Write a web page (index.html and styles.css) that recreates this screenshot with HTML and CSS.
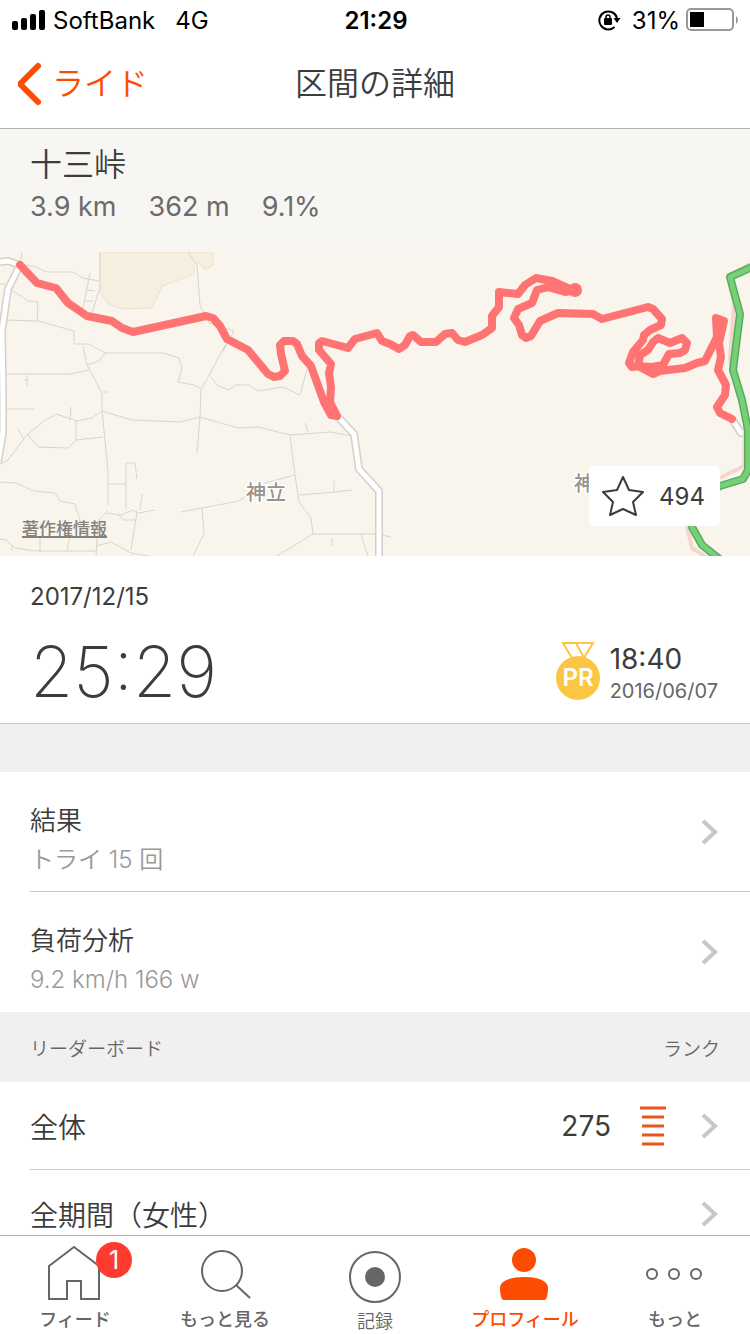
FILE: index.html
```
<!DOCTYPE html>
<html lang="ja">
<head>
    <meta charset="UTF-8">
    <meta name="viewport" content="width=device-width, initial-scale=1.0">
    <title>区間の詳細</title>
    <link rel="stylesheet" href="styles.css">
</head>
<body>

    <div class="status-bar">
        <div class="status-left">
            <svg class="signal" width="34" height="20" viewBox="0 0 34 20">
                <rect x="0" y="11" width="6" height="9" rx="2"/>
                <rect x="9" y="8" width="6" height="12" rx="2"/>
                <rect x="18" y="4" width="6" height="16" rx="2"/>
                <rect x="27" y="0" width="6" height="20" rx="2"/>
            </svg>
            <span class="carrier">SoftBank</span>
            <span>4G</span>
        </div>
        <span class="clock">21:29</span>
        <div class="status-right">
            <svg class="lock" width="24" height="22" viewBox="0 0 24 22">
                <path d="M16.500 18A9 9 0 1 1 19 9" fill="none" stroke="#000" stroke-width="2"/>
                <path d="M15.500 9h7l-3.500 5z"/>
                <rect x="6" y="9" width="8" height="7" rx="1"/>
                <path d="M8 10V8a2 2 0 0 1 4 0v2" fill="none" stroke="#000" stroke-width="1.500"/>
            </svg>
            <span>31%</span>
            <svg class="battery" width="54" height="24" viewBox="0 0 54 24">
                <rect x="1" y="1" width="46" height="21" rx="4" fill="none" stroke="#999" stroke-width="2"/>
                <rect x="4" y="4" width="14" height="15"/>
                <path d="M50 8a5 5 0 0 1 0 8z" fill="#999"/>
            </svg>
        </div>
    </div>

    <header class="nav">
        <a href="#" class="back">
            <svg width="26" height="44" viewBox="0 0 26 44">
                <path d="M22 4L4 22l18 18" fill="none" stroke="#fc4c02" stroke-width="6" stroke-linecap="round" stroke-linejoin="bevel"/>
            </svg>
            ライド
        </a>
        <h1>区間の詳細</h1>
    </header>

    <main class="content">
        <section class="segment">
            <h2>十三峠</h2>
            <div class="segment-stats">
                <span>3.9 km</span>
                <span>362 m</span>
                <span>9.1%</span>
            </div>
        </section>

        <section class="map">
            <svg class="map-canvas" viewBox="0 252 750 304">
                <!-- park -->
                <path class="park" d="M100 252V293l10 12 14 4 28-1 10-22 32-12 0-10 4-2 7 8 8-5V252z"/>

                <!-- small roads -->
                <g class="path">
                    <path d="M20 265l13 1 14 6 26 0 10 6 16 3M20 265l2-13M90 273l-7 35M99 290l-9 30M100 252v38M86 290l9 1M85 301l8 0M188 252l9 13 3 40 9 18 25 8-11 20"/>
                    <path d="M0 284h5M10 289l12 8 6 4 10 1-1 18M5 320l33 1 36 10 0 13 15 0 16 9 59 0 15 5 3 10-4 14 16 3 7 4"/>
                    <path d="M83 347l4 18 15 28 0 18 6 60 0 34M87 365l12-4 6-8M5 374l65 0 19-4M27 375v11M24 380h5M5 409h29M102 392h5"/>
                    <path d="M102 411l-10 7-15 3-21-7-12 7-17 14-19 25-8 4M28 435l10 12 30 1 8-8 27-3M71 407l-1 13M76 420v20M18 429l6 10"/>
                    <path d="M102 411l30 9 48 2 20-5 38 11 20-1 32 8 40-3 22 4M226 344l-25 46-1 28-3 35M305 423l3 9"/>
                    <path d="M211 377l6 8 11 5 8-5 13 0 9 6 25-4 17 8 7-26M290 435l5 40-30 8-26 18-58 11M295 475l4 27 12 16 2 16-36 22M299 495l36-3 17-2M334 481v10M313 534h62M332 538v8M361 534l7 22"/>
                    <path d="M126 510V463h9l2 16M108 484h18M142 494l-2 16M106 513l15 2 12-5 6 3 16-3M137 512l-6 38M119 515l4 5h14M202 508l2 26-11 22"/>
                    <path d="M0 482l16 1 18 8 21 2 5 8 15 3 6 20M108 510l-10 11-2 35M0 539l6 1 9 8 21 3 61 0M12 545v6M40 536v15M70 535l-3 16M96 546l15-4 20 11 18 3M382 535l9 2"/>
                </g>

                <!-- main roads -->
                <path class="road-edge" d="M0 262l8-1 12 4-12 24-6 42 1 65 0 36-5 30M337 416l17 18 5 35 20 22V560M732 419l9 14h9"/>
                <path class="road" d="M0 262l8-1 12 4-12 24-6 42 1 65 0 36-5 30M337 416l17 18 5 35 20 22V560M732 419l9 14h9"/>
                <path class="road-shade" d="M750 264L728 276 734 304 730 360 745 420 744 466 720 478M687 526L692 548 708 558"/>
                <path class="highway-edge" d="M752 267L730 277 740 314 733 370 742 400 748 430 748 470 743 479 720 486 689 506 692 527 702 545 722 561"/>
                <path class="highway" d="M752 267L730 277 740 314 733 370 742 400 748 430 748 470 743 479 720 486 689 506 692 527 702 545 722 561"/>

                <!-- segment -->
                <path class="route" d="M20 265L37 283 56 288 68 303 87 316 112 321 122 328 133 332 206 316 213 318 220 326 227 339 248 350 268 374 274 377 280 376 285 371 281 354 280 345 284 341 293 341 297 344 302 356 311 366 324 402 331 415 337 416 330 402 331 387 329 373 331 364 319 350 319 343 322 341 348 348 355 339 377 333 382 341 390 344 399 349 405 345 410 336 413 335 421 342 436 342 445 334 452 333 458 340 465 342 482 335 492 328 492 316 499 307 499 292 518 294 525 285 536 278 552 281 572 290 577 290 565 292 548 287 537 290 532 303 518 309 514 318 519 325 522 335 526 338 531 336 540 321 558 313 593 314 602 319 648 307 653 309 662 319 661 325 650 330 644 335 643 340 633 352 629 363 632 367 638 366 640 355 648 350 653 342 658 338 670 343 682 338 687 343 685 350 680 353 669 354 663 365 652 367 638 366 653 374 660 371 685 368 697 363 705 361 717 337 716 318 724 321 719 343 721 357 718 370 726 385 725 395 717 407 720 413 732 419"/>
                <circle class="route-end" cx="575" cy="290" r="7"/>

                <text class="place" x="246" y="500">神立</text>
                <text class="place" x="574" y="491">神立</text>
            </svg>
            <a href="#" class="copyright">著作権情報</a>
            <button class="favorite">
                <svg width="44" height="42" viewBox="0 0 44 42">
                    <path d="M22 2L28 15 42 17 32 27 35 40 22 34 9 40 12 27 2 17 16 15z" fill="none" stroke="#3c3c3c" stroke-width="2" stroke-linejoin="round"/>
                </svg>
                494
            </button>
        </section>

        <section class="effort">
            <div class="date">2017/12/15</div>
            <div class="effort-row">
                <div class="time">25:29</div>
                <div class="pr">
                    <svg width="44" height="58" viewBox="0 0 44 58">
                        <path d="M7 1h30l-9 15H16zM20 1l8 15" fill="none" stroke="#fcc644" stroke-width="2"/>
                        <circle cx="22" cy="36" r="22" fill="#fcc644"/>
                        <text class="pr-text" x="22" y="44">PR</text>
                    </svg>
                    <div class="pr-info">
                        <div class="pr-time">18:40</div>
                        <div class="pr-date">2016/06/07</div>
                    </div>
                </div>
            </div>
        </section>

        <ul class="list summary">
            <li>
                <a href="#" class="row tall">
                    <div class="row-text">
                        <div class="row-title">結果</div>
                        <div class="row-sub">トライ 15 回</div>
                    </div>
                    <svg class="chevron" width="17" height="26" viewBox="0 0 17 26"><path d="M2 2l12 11L2 24"/></svg>
                </a>
            </li>
            <li>
                <a href="#" class="row tall">
                    <div class="row-text">
                        <div class="row-title">負荷分析</div>
                        <div class="row-sub">9.2 km/h 166 w</div>
                    </div>
                    <svg class="chevron" width="17" height="26" viewBox="0 0 17 26"><path d="M2 2l12 11L2 24"/></svg>
                </a>
            </li>
        </ul>

        <div class="section-header">
            <span>リーダーボード</span>
            <span>ランク</span>
        </div>

        <ul class="list">
            <li>
                <a href="#" class="row">
                    <div class="row-text row-name">全体</div>
                    <span class="rank">275</span>
                    <svg class="rank-icon" width="26" height="40" viewBox="0 0 26 40">
                        <path d="M0 2h26M2 11h22M2 20h22M2 29h22M2 38h22" stroke="#e8561a" stroke-width="3"/>
                    </svg>
                    <svg class="chevron" width="17" height="26" viewBox="0 0 17 26"><path d="M2 2l12 11L2 24"/></svg>
                </a>
            </li>
            <li>
                <a href="#" class="row">
                    <div class="row-text row-name">全期間（女性）</div>
                    <svg class="chevron" width="17" height="26" viewBox="0 0 17 26"><path d="M2 2l12 11L2 24"/></svg>
                </a>
            </li>
        </ul>
    </main>

    <nav class="tab-bar">
        <a href="#" class="tab">
            <svg width="54" height="56" viewBox="0 0 54 56">
                <path d="M1 21L26 2l25 19v33H33V36H19v18H1z"/>
            </svg>
            <span class="badge">1</span>
            フィード
        </a>
        <a href="#" class="tab">
            <svg width="54" height="56" viewBox="0 0 54 56">
                <circle cx="24" cy="26" r="20"/>
                <path d="M38 40l14 13"/>
            </svg>
            もっと見る
        </a>
        <a href="#" class="tab record">
            <svg width="54" height="58" viewBox="0 0 54 58">
                <circle cx="27" cy="32" r="25"/>
                <circle cx="27" cy="32" r="10" fill="#666" stroke="none"/>
            </svg>
            記録
        </a>
        <a href="#" class="tab active">
            <svg width="54" height="56" viewBox="0 0 54 56">
                <circle cx="26" cy="15" r="12"/>
                <path d="M2 43C2 35 14 32 26 32s24 3 24 11c0 5-1 9-2 11-1 1-1 1-3 1H7c-2 0-2 0-3-1-1-2-2-6-2-11z"/>
            </svg>
            プロフィール
        </a>
        <a href="#" class="tab">
            <svg width="58" height="56" viewBox="0 0 58 56">
                <circle cx="6" cy="29" r="5"/>
                <circle cx="28" cy="29" r="5"/>
                <circle cx="50" cy="29" r="5"/>
            </svg>
            もっと
        </a>
    </nav>

</body>
</html>
```
FILE: styles.css
```
* {
    box-sizing: border-box;
}
body {
    margin: 0;
    height: 100vh;
    display: flex;
    flex-direction: column;
    overflow: hidden;
    font-family: Inter, "Noto Sans CJK JP", sans-serif;
    font-weight: 400;
    color: #3c3c3c;
    background-color: #fff;
}
a {
    color: inherit;
    text-decoration: none;
}
h1, h2 {
    margin: 0;
    font-size: 32px;
    font-weight: 350;
    line-height: 44px;
}
svg {
    display: block;
    flex-shrink: 0;
}

/* Status bar */
.status-bar {
    display: grid;
    grid-template-columns: 1fr auto 1fr;
    align-items: center;
    height: 40px;
    padding: 0 10px 0 12px;
    font-size: 24px;
    color: #000;
}
.status-left,
.status-right {
    display: flex;
    align-items: center;
}
.status-right {
    justify-content: flex-end;
}
.signal {
    margin-right: 7px;
}
.carrier {
    margin-right: 20px;
}
.clock {
    font-weight: 600;
}
.lock {
    margin-right: 10px;
}
.battery {
    margin-left: 6px;
}

/* Navigation */
.nav {
    display: grid;
    grid-template-columns: 1fr auto 1fr;
    align-items: center;
    height: 89px;
    padding: 0 16px;
    border-bottom: 1px solid #b2b2b2;
}
.back {
    display: flex;
    align-items: center;
    gap: 10px;
    font-size: 32px;
    font-weight: 350;
    line-height: 44px;
    color: #fc4c02;
}

.content {
    flex: 1;
    min-height: 0;
    overflow: hidden;
}

/* Segment name */
.segment {
    padding: 14px 30px 25px;
    background-color: #f7f6f3;
}
.segment-stats {
    display: flex;
    gap: 32px;
    font-size: 27px;
    line-height: 40px;
    color: #6b6b6b;
}

/* Map */
.map {
    position: relative;
    background-color: #f9f5ed;
}
.map-canvas {
    width: 100%;
    height: auto;
}
.map-canvas path {
    fill: none;
    stroke-linejoin: round;
}
.map-canvas .park {
    fill: #f6efdf;
    stroke: #ece0cd;
}
.map-canvas .path {
    stroke: #d8d5ce;
    stroke-width: 1;
}
.map-canvas .road-edge {
    stroke: #d3d0ca;
    stroke-width: 8;
}
.map-canvas .road {
    stroke: #fff;
    stroke-width: 5;
}
.map-canvas .road-shade {
    stroke: #f6d6cb;
    stroke-width: 4;
}
.map-canvas .highway-edge {
    stroke: #55ad60;
    stroke-width: 8;
}
.map-canvas .highway {
    stroke: #77d077;
    stroke-width: 5;
}
.map-canvas .route {
    stroke: #ff7373;
    stroke-width: 8;
    stroke-linecap: round;
}
.route-end {
    fill: #ff7373;
}
.place {
    font-size: 20px;
    font-weight: 500;
    fill: #96938e;
    stroke: #fff;
    stroke-width: 3px;
    paint-order: stroke;
}
.copyright {
    position: absolute;
    left: 22px;
    bottom: 14px;
    font-size: 17px;
    font-weight: 500;
    line-height: 26px;
    color: #85827c;
    text-decoration: underline 2px;
}
.favorite {
    position: absolute;
    right: 30px;
    bottom: 30px;
    display: flex;
    align-items: center;
    gap: 14px;
    height: 60px;
    padding: 0 15px 0 12px;
    border: none;
    border-radius: 5px;
    background-color: #fff;
    font-family: inherit;
    font-size: 24px;
    color: #3c3c3c;
}

/* Effort */
.effort {
    padding: 25px 32px 16px 30px;
    border-bottom: 1px solid #c8c8c8;
}
.date {
    font-size: 24px;
    line-height: 32px;
}
.effort-row {
    display: flex;
    align-items: flex-start;
    justify-content: space-between;
    padding-top: 24px;
}
.time {
    font-size: 70px;
    font-weight: 200;
    line-height: 70px;
}
.pr {
    display: flex;
    align-items: flex-start;
    gap: 10px;
    padding-top: 5px;
}
.pr-text {
    font-size: 24px;
    font-weight: 600;
    text-anchor: middle;
    fill: #fff;
}
.pr-info {
    padding-top: 1px;
    line-height: 32px;
}
.pr-time {
    font-size: 28px;
}
.pr-date {
    font-size: 20px;
    color: #666;
}

/* Lists */
.list {
    margin: 0;
    padding: 0;
    list-style: none;
}
.summary {
    border-top: 48px solid #f0f0f0;
}
.row {
    display: flex;
    align-items: center;
    height: 88px;
    margin-left: 30px;
    padding-right: 32px;
    border-bottom: 1px solid #c8c8c8;
}
.row.tall {
    height: 120px;
}
li:last-child .row {
    border-bottom: none;
}
.row-text {
    flex: 1;
}
.tall .row-text {
    padding-top: 16px;
}
.row-title {
    font-size: 26px;
    font-weight: 350;
    line-height: 40px;
}
.row-sub {
    font-size: 24px;
    font-weight: 350;
    line-height: 38px;
    color: #999;
}
.row-name {
    font-size: 28px;
    font-weight: 350;
}
.rank {
    font-size: 28px;
}
.rank-icon {
    margin: 0 35px 0 29px;
}
.chevron {
    fill: none;
    stroke: #c7c7cc;
    stroke-width: 4;
}
.section-header {
    display: flex;
    align-items: center;
    justify-content: space-between;
    height: 70px;
    padding: 0 30px;
    font-size: 19px;
    font-weight: 350;
    color: #666;
    background-color: #f0f0f0;
}

/* Tab bar */
.tab-bar {
    display: flex;
    height: 99px;
    border-top: 1px solid #b2b2b2;
    background-color: #fff;
}
.tab {
    position: relative;
    flex: 1;
    display: flex;
    flex-direction: column;
    align-items: center;
    padding-top: 9px;
    font-size: 18px;
    font-weight: 500;
    line-height: 38px;
    color: #666;
}
.tab svg {
    fill: none;
    stroke: #666;
    stroke-width: 2;
}
.tab.record {
    font-weight: 350;
}
.tab.active {
    color: #fc4c02;
}
.tab.active svg {
    fill: #fc4c02;
    stroke: none;
}
.badge {
    position: absolute;
    top: 6px;
    left: 50%;
    width: 36px;
    height: 36px;
    margin-left: 21px;
    border-radius: 50%;
    background-color: #ff3b30;
    font-size: 25px;
    font-weight: 400;
    line-height: 36px;
    text-align: center;
    color: #fff;
}
```
